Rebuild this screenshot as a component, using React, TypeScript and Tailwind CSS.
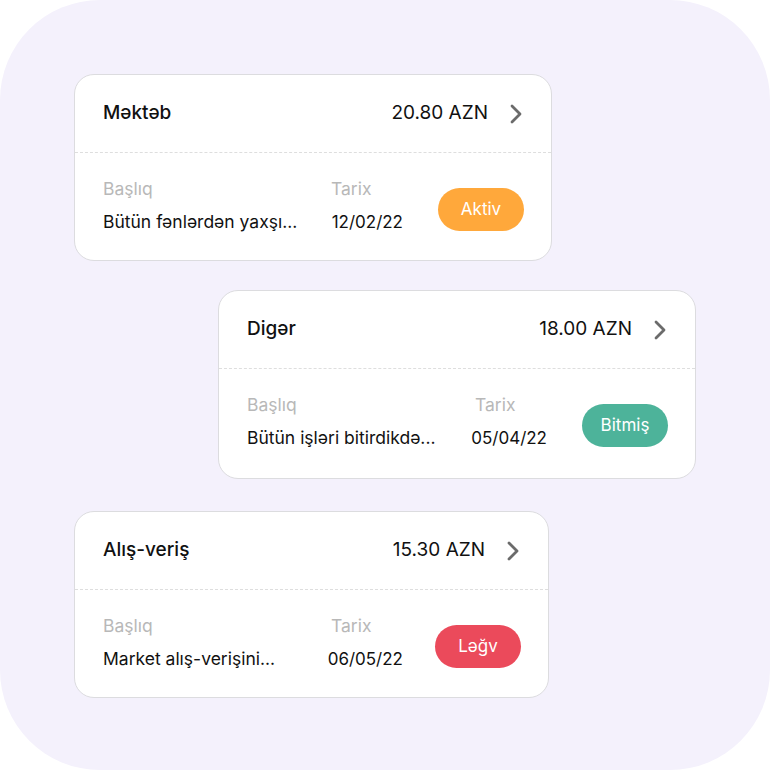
type Status = 'aktiv' | 'bitmis' | 'legv';

interface Expense {
  category: string;
  amount: string;
  title: string;
  date: string;
  status: Status;
  offset: string;
}

const expenses: Expense[] = [
  { category: 'Məktəb', amount: '20.80 AZN', title: 'Bütün fənlərdən yaxşı...', date: '12/02/22', status: 'aktiv', offset: 'ml-[74px] w-[478px]' },
  { category: 'Digər', amount: '18.00 AZN', title: 'Bütün işləri bitirdikdə...', date: '05/04/22', status: 'bitmis', offset: 'ml-[218px] mt-[29px] w-[478px] pb-[2px]' },
  { category: 'Alış-veriş', amount: '15.30 AZN', title: 'Market alış-verişini...', date: '06/05/22', status: 'legv', offset: 'ml-[74px] mt-[32px] w-[475px]' },
];

const statusStyles: Record<Status, { label: string; className: string }> = {
  aktiv: { label: 'Aktiv', className: 'bg-[#ffa83b]' },
  bitmis: { label: 'Bitmiş', className: 'bg-[#4db39a]' },
  legv: { label: 'Ləğv', className: 'bg-[#eb4a5b]' },
};

function Chevron() {
  return (
    <svg width="12" height="20" viewBox="0 0 12 20" fill="none">
      <path d="M2 2l8 8-8 8" stroke="#6b6b6b" strokeWidth="2.8" strokeLinecap="round" strokeLinejoin="round" />
    </svg>
  );
}

function ExpenseCard({ item }: { item: Expense }) {
  const status = statusStyles[item.status];
  return (
    <div className={`${item.offset} bg-white border border-[#dcdcdf] rounded-[20px]`}>
      {/* Header */}
      <div className="h-[77px] flex items-center pl-[28px] pr-[29px]">
        <span className="text-[19px] font-medium text-[#111]">{item.category}</span>
        <span className="ml-auto text-[19px] text-[#111]">{item.amount}</span>
        <span className="ml-[22px] flex items-center">
          <Chevron />
        </span>
      </div>

      <div className="border-t border-dashed border-[#dedede]" />

      {/* Details */}
      <div className="flex items-start pl-[28px] pr-[27px] pt-[24px] pb-[26px]">
        <div className="w-[156px] flex flex-col gap-[9px]">
          <span className="text-[17.5px] leading-6 text-[#b8b8b8]">Başlıq</span>
          <span className="text-[17.5px] leading-6 text-[#111] whitespace-nowrap">{item.title}</span>
        </div>
        <div className="ml-[72px] w-[72px] flex flex-col items-end gap-[9px]">
          <span className="self-start text-[17.5px] leading-6 text-[#b8b8b8]">Tarix</span>
          <span className="text-[17px] leading-6 text-[#111] whitespace-nowrap">{item.date}</span>
        </div>
        <div
          className={`ml-auto mt-[11px] w-[86px] h-[43px] rounded-full flex items-center justify-center text-[17px] text-white ${status.className}`}
        >
          {status.label}
        </div>
      </div>
    </div>
  );
}

export default function App() {
  return (
    <div className="w-[770px] h-[770px] bg-white" style={{ fontFamily: 'Inter, "Noto Sans", sans-serif' }}>
      <div className="w-full h-full bg-[#f4f1fc] rounded-[100px] pt-[74px] flex flex-col">
        {expenses.map((item) => (
          <ExpenseCard key={item.category} item={item} />
        ))}
      </div>
    </div>
  );
}
